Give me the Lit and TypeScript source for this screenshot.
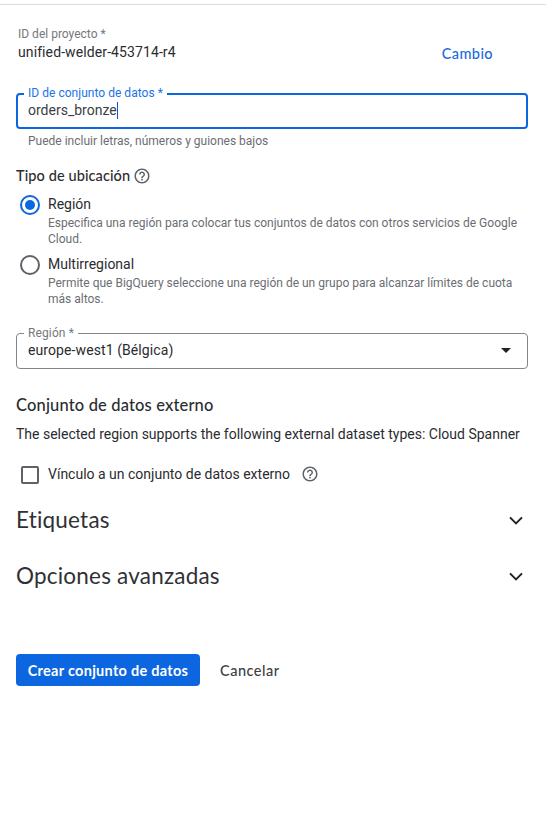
import { LitElement, html, css } from "lit";
import { customElement, property, state } from "lit/decorators.js";

@customElement("help-icon")
class HelpIcon extends LitElement {
  static styles = css`
    :host { display: block; width: 18px; height: 18px; }
    svg { display: block; }
  `;
  render() {
    return html`<svg width="18" height="18" viewBox="0 0 24 24" fill="#5f6368">
      <path d="M11 18h2v-2h-2v2zm1-16C6.48 2 2 6.48 2 12s4.48 10 10 10 10-4.48 10-10S17.52 2 12 2zm0 18c-4.41 0-8-3.59-8-8s3.59-8 8-8 8 3.59 8 8-3.59 8-8 8zm0-14c-2.21 0-4 1.79-4 4h2c0-1.1.9-2 2-2s2 .9 2 2c0 2-3 1.75-3 5h2c0-2.25 3-2.5 3-5 0-2.21-1.79-4-4-4z"/>
    </svg>`;
  }
}

@customElement("outlined-field")
class OutlinedField extends LitElement {
  @property() label = "";
  @property({ type: Boolean, reflect: true }) focused = false;
  static styles = css`
    :host {
      display: flex; position: relative; box-sizing: border-box; height: 36px;
      border: 1px solid #80868b; border-radius: 4px; padding: 0 11px 2px;
      align-items: center; font-size: 14px; line-height: 20px; color: #2b2c30; letter-spacing: 0.09px;
    }
    :host([focused]) { border: 2px solid #0b66e0; padding: 0 10px 2px; color: #3c4043; letter-spacing: 0; }
    .label {
      position: absolute; left: 7px; top: -9px; padding: 0 4px; background: #fff;
      font-size: 12px; line-height: 16px; color: #74787d; white-space: nowrap; letter-spacing: 0.12px;
    }
    :host([focused]) .label { left: 6px; top: -10px; color: #1a73e8; letter-spacing: 0.03px; }
    .content { display: flex; flex: 1; align-items: center; justify-content: space-between; }
  `;
  render() {
    return html`<span class="label">${this.label}</span><div class="content"><slot></slot></div>`;
  }
}

@customElement("radio-option")
class RadioOption extends LitElement {
  @property() label = "";
  @property() description = "";
  @property({ type: Boolean, reflect: true }) checked = false;
  static styles = css`
    :host { display: grid; grid-template-columns: 28px 1fr; height: 60px; }
    .ring {
      width: 20px; height: 20px; box-sizing: border-box; border: 2px solid #5f6368;
      border-radius: 50%; margin: 1px 0 0 4px; display: grid; place-items: center;
    }
    :host([checked]) .ring { border-color: #0b66e0; }
    :host([checked]) .ring::after {
      content: ""; width: 10px; height: 10px; border-radius: 50%; background: #0b66e0;
    }
    .text { padding-left: 4px; }
    .title { font-size: 14px; line-height: 20px; color: #2b2c30; }
    .desc { font-size: 12px; line-height: 16px; color: #6a6e73; margin-top: 1px; }
  `;
  render() {
    return html`<span class="ring"></span>
      <div class="text">
        <div class="title">${this.label}</div>
        <div class="desc">${this.description}</div>
      </div>`;
  }
}

@customElement("expand-row")
class ExpandRow extends LitElement {
  @property() label = "";
  static styles = css`
    :host {
      display: flex; align-items: center; justify-content: space-between; height: 56px;
      font: 400 22.5px/28px "Google Sans", Lato, sans-serif; color: #303135;
      padding-right: 4px;
    }
    .title { letter-spacing: 0.2px; }
    svg { display: block; }
  `;
  render() {
    return html`<span class="title">${this.label}</span>
      <svg width="16" height="16" viewBox="0 0 16 16" fill="none" stroke="#202124" stroke-width="2">
        <path d="M2 5.4 8 11.4 14 5.4"/>
      </svg>`;
  }
}

@customElement("app-root")
class AppRoot extends LitElement {
  @state() private datasetId = "orders_bronze";

  static styles = css`
    :host {
      display: block; height: 831px; box-sizing: border-box; overflow: hidden;
      padding-top: 4px; background: #fff; font-family: Roboto, sans-serif; color: #2b2c30;
    }
    .panel { border-top: 1px solid #dadce0; padding: 21px 18px 0 16px; }
    .project { display: flex; justify-content: space-between; height: 67px; padding: 0 35px 0 2px; }
    .project-label { font-size: 12px; line-height: 16px; color: #74787d; }
    .project-id { font-size: 14px; line-height: 20px; letter-spacing: 0.1px; }
    .brand { font-family: "Google Sans", Lato, sans-serif; }
    .change { font-size: 14.5px; line-height: 20px; font-weight: 500; letter-spacing: 0.4px; color: #1a6ae0; margin-top: 18px; }
    .value { display: flex; align-items: center; }
    .caret { width: 1px; height: 17px; background: #1a56c4; }
    .hint { font-size: 12px; line-height: 16px; color: #6a6e73; padding: 4px 12px 0; height: 35px; box-sizing: border-box; }
    .heading { display: flex; align-items: center; height: 24px; gap: 3px; font-size: 14.5px; font-weight: 500; letter-spacing: 0.1px; }
    .heading span { padding-bottom: 1px; }
    .radios { padding-top: 6px; height: 145px; box-sizing: border-box; }
    .external { font-size: 16.5px; line-height: 24px; font-weight: 500; letter-spacing: 0.15px; margin-top: 24px; }
    .note { font-size: 14px; line-height: 20px; margin-top: 7px; white-space: nowrap; }
    .check { display: flex; align-items: center; height: 20px; margin-top: 20px; padding-left: 5px; font-size: 14px; }
    .box { width: 18px; height: 18px; box-sizing: border-box; border: 2px solid #5f6368; border-radius: 2px; margin: 2px 9px 0 0; }
    .check help-icon { margin-left: 11px; }
    .sections { padding-top: 8px; }
    .actions { display: flex; align-items: center; gap: 20px; margin-top: 50px; font-size: 14.5px; }
    .primary {
      width: 184px; height: 32px; border-radius: 4px; background: #0b66e0; color: #fff;
      font-weight: 700; display: grid; place-items: center; letter-spacing: 0.28px;
    }
    .cancel { color: #3c4043; font-weight: 500; letter-spacing: 0.5px; }
  `;

  render() {
    return html`<main class="panel">
      <div class="project">
        <div>
          <div class="project-label">ID del proyecto *</div>
          <div class="project-id">unified-welder-453714-r4</div>
        </div>
        <a class="change brand">Cambio</a>
      </div>
      <outlined-field label="ID de conjunto de datos *" focused>
        <span class="value">${this.datasetId}<i class="caret"></i></span>
      </outlined-field>
      <div class="hint">Puede incluir letras, números y guiones bajos</div>
      <div class="heading brand"><span>Tipo de ubicación</span><help-icon></help-icon></div>
      <div class="radios">
        <radio-option checked label="Región"
          description="Especifica una región para colocar tus conjuntos de datos con otros servicios de Google Cloud."></radio-option>
        <radio-option label="Multirregional"
          description="Permite que BigQuery seleccione una región de un grupo para alcanzar límites de cuota más altos."></radio-option>
      </div>
      <outlined-field label="Región *">
        <span>europe-west1 (Bélgica)</span>
        <svg width="20" height="20" viewBox="0 0 20 20" fill="#202124"><path d="M5 8h10l-5 5z"/></svg>
      </outlined-field>
      <div class="external brand">Conjunto de datos externo</div>
      <div class="note">The selected region supports the following external dataset types: Cloud Spanner</div>
      <div class="check"><span class="box"></span><span>Vínculo a un conjunto de datos externo</span><help-icon></help-icon></div>
      <div class="sections">
        <expand-row label="Etiquetas"></expand-row>
        <expand-row label="Opciones avanzadas"></expand-row>
      </div>
      <div class="actions brand">
        <div class="primary">Crear conjunto de datos</div>
        <div class="cancel">Cancelar</div>
      </div>
    </main>`;
  }
}
